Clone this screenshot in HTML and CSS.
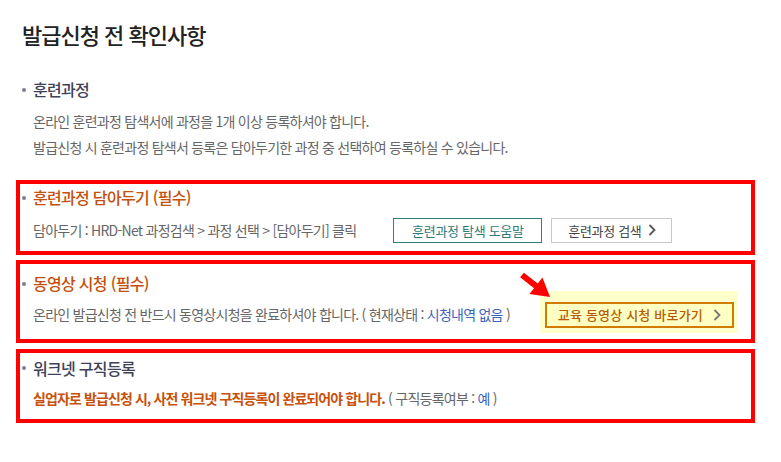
FILE: index.html
```html
<!DOCTYPE html>
<html lang="ko">
<head>
<meta charset="utf-8">
<link rel="stylesheet" href="styles.css">
</head>
<body>
<div class="page">
  <h1 class="title">발급신청 전 확인사항</h1>

  <section class="sec sec-plain">
    <h2 class="head head-gray">훈련과정</h2>
    <p class="body">온라인 훈련과정 탐색서에 과정을 1개 이상 등록하셔야 합니다.</p>
    <p class="body">발급신청 시 훈련과정 탐색서 등록은 담아두기한 과정 중 선택하여 등록하실 수 있습니다.</p>
  </section>

  <section class="sec box box1">
    <h2 class="head head-orange">훈련과정 담아두기 (필수)</h2>
    <div class="row row1">
      <p class="body">담아두기 : HRD-Net 과정검색 &gt; 과정 선택 &gt; [담아두기] 클릭</p>
      <div class="btns">
        <button class="btn btn-teal">훈련과정 탐색 도움말</button>
        <button class="btn btn-gray">훈련과정 검색<svg class="chev" width="8" height="12" viewBox="0 0 8 12"><path d="M1.5 1 L6.5 6 L1.5 11" fill="none" stroke="#555" stroke-width="1.8"/></svg></button>
      </div>
    </div>
  </section>

  <section class="sec box box2">
    <h2 class="head head-orange">동영상 시청 (필수)</h2>
    <div class="row row2">
      <p class="body">온라인 발급신청 전 반드시 동영상시청을 완료하셔야 합니다. ( 현재상태 : <span class="blue">시청내역 없음</span> )</p>
      <div class="hl">
        <svg class="arrow" width="34" height="28" viewBox="0 0 34 28"><polygon points="4.87,0.65 18.77,11.45 23.43,5.57 31,25 10.37,22.03 15.03,16.15 1.13,5.35" fill="#f00"/></svg>
        <button class="btn btn-orange">교육 동영상 시청 바로가기<svg class="chev" width="8" height="12" viewBox="0 0 8 12"><path d="M1.5 1 L6.5 6 L1.5 11" fill="none" stroke="#777" stroke-width="1.8"/></svg></button>
      </div>
    </div>
  </section>

  <section class="sec box box3">
    <h2 class="head head-gray">워크넷 구직등록</h2>
    <p class="body"><strong class="warn">실업자로 발급신청 시, 사전 워크넷 구직등록이 완료되어야 합니다.</strong> ( 구직등록여부 : <span class="blue">예</span> )</p>
  </section>
</div>
</body>
</html>
```

FILE: styles.css
```css
* { box-sizing: border-box; margin: 0; padding: 0; }
html, body { background: #fff; }
body {
  font-family: "Noto Sans CJK KR", "Noto Sans", sans-serif;
  color: #666;
}
.page {
  width: 781px;
  padding-top: 18px;
}
.title {
  font-size: 22px;
  line-height: 32px;
  font-weight: 500;
  color: #222;
  letter-spacing: -1px;
  margin-left: 22px;
}
.sec-plain {
  margin-top: 27px;
  padding-left: 33px;
}
.head {
  font-size: 16px;
  line-height: 24px;
  font-weight: 500;
  letter-spacing: -0.7px;
}
.head::before {
  content: "";
  display: inline-block;
  width: 4px;
  height: 4px;
  border-radius: 50%;
  background: #7a7f90;
  margin-left: -11px;
  margin-right: 7px;
  vertical-align: middle;
  position: relative;
  top: -2px;
}
.head-gray { color: #3e4256; }
.head-orange { color: #c4500e; }
.body {
  font-size: 14px;
  line-height: 26px;
  letter-spacing: -0.75px;
  color: #666;
}
.sec-plain .head { margin-bottom: 7px; }
.box {
  margin-left: 16px;
  width: 739px;
  border: 4px solid #ff0000;
  padding-left: 13px;
}
.box1 { margin-top: 20px; padding-top: 1px; padding-bottom: 8px; }
.box2 { margin-top: 5px; padding-top: 7px; padding-bottom: 11px; }
.box3 { margin-top: 6px; padding-top: 3px; padding-bottom: 8px; }
.row {
  display: flex;
  align-items: center;
}
.row1 { margin-top: 8px; gap: 37px; }
.row2 { margin-top: 6px; gap: 35px; }
.box3 .body { margin-top: 5px; }
.btns { display: flex; gap: 9px; }
.btn {
  font-family: inherit;
  font-size: 13px;
  height: 25px;
  background: #fff;
  display: inline-flex;
  align-items: center;
  justify-content: center;
  gap: 6px;
  letter-spacing: -0.3px;
  cursor: pointer;
}
.btn-teal {
  width: 149px;
  border: 1px solid #2e8080;
  color: #2e7a78;
}
.btn-gray {
  width: 121px;
  border: 1px solid #c8c8c8;
  color: #444;
}
.hl {
  position: relative;
  padding: 10px 4px 5px 5px;
  margin-top: -10px;
  margin-bottom: -5px;
  margin-left: -5px;
  background: #ffffcc;
}
.arrow {
  position: absolute;
  left: -21px;
  top: -19px;
}
.btn-orange {
  width: 189px;
  height: 26px;
  border: 2px solid #d07c00;
  background: #ffffc4;
  color: #b55a00;
  font-weight: 500;
  letter-spacing: 0.2px;
  gap: 10px;
}
.blue { color: #3b63bf; }
.warn { color: #c8500a; font-weight: 700; letter-spacing: -0.9px; }
```
